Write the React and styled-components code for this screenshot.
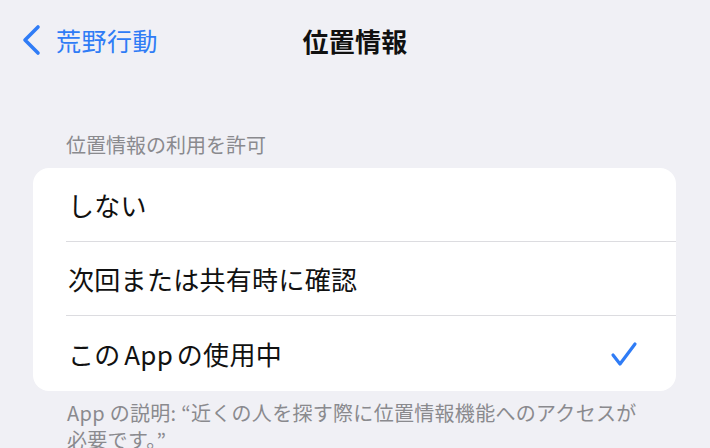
import React from "react";
import styled, { createGlobalStyle } from "styled-components";

const Global = createGlobalStyle`
  html, body { margin: 0; padding: 0; background: #f0f0f5; }
  body {
    font-family: "Noto Sans CJK JP", "Noto Sans", sans-serif;
    -webkit-font-smoothing: antialiased;
  }
`;

const Page = styled.div`
  width: 710px;
  height: 448px;
  overflow: hidden;
  background: #f0f0f5;
`;

const NavBar = styled.header`
  display: grid;
  grid-template-columns: 1fr auto 1fr;
  align-items: center;
  height: 80px;
  padding: 0 22px;
  box-sizing: border-box;
`;

const Back = styled.div`
  display: flex;
  align-items: center;
  gap: 14px;
  color: #2f7cf6;
  font-size: 25px;
  letter-spacing: 0.5px;
`;

const Title = styled.h1`
  margin: 0;
  font-size: 26px;
  font-weight: 700;
  color: #111;
  letter-spacing: 0.2px;
`;

const Content = styled.main`
  padding: 0 34px 0 33px;
`;

const SectionHeader = styled.div`
  margin-top: 51px;
  padding-left: 33px;
  font-size: 20px;
  line-height: 28px;
  color: #8a8a8e;
`;

const Card = styled.div`
  margin-top: 9px;
  background: #fff;
  border-radius: 16px;
  overflow: hidden;
`;

const Row = styled.div`
  padding-left: 33px;
`;

const RowInner = styled.div`
  display: flex;
  align-items: center;
  justify-content: space-between;
  height: ${(p) => (p.$last ? 75 : 73)}px;
  padding: 0 38px 0 2px;
  border-bottom: ${(p) => (p.$last ? "none" : "1px solid #dcdce0")};
  font-size: 26px;
  letter-spacing: 0.3px;
  word-spacing: -2.5px;
  color: #111;
`;

const Footer = styled.div`
  margin-top: 8px;
  padding-left: 34px;
  padding-right: 30px;
  font-size: 20px;
  line-height: 27px;
  letter-spacing: 0.3px;
  color: #8a8a8e;
`;

const Chevron = () => (
  <svg width="20" height="32" viewBox="0 0 20 32">
    <polyline
      points="16,3 3,16 16,29"
      fill="none"
      stroke="#2f7cf6"
      strokeWidth="3.6"
      strokeLinecap="round"
      strokeLinejoin="round"
    />
  </svg>
);

const Check = () => (
  <svg width="28" height="26" viewBox="0 0 28 26">
    <polyline
      points="3,14 10,23 25,3"
      fill="none"
      stroke="#2f7cf6"
      strokeWidth="3.2"
      strokeLinecap="round"
      strokeLinejoin="round"
    />
  </svg>
);

const options = [
  { label: "しない" },
  { label: "次回または共有時に確認" },
  { label: "この App の使用中", checked: true },
];

export default function App() {
  return (
    <Page>
      <Global />
      <NavBar>
        <Back>
          <Chevron />
          <span>荒野行動</span>
        </Back>
        <Title>位置情報</Title>
        <div />
      </NavBar>
      <Content>
        <SectionHeader>位置情報の利用を許可</SectionHeader>
        <Card>
          {options.map((o, i) => (
            <Row key={o.label}>
              <RowInner $last={i === options.length - 1}>
                <span>{o.label}</span>
                {o.checked && <Check />}
              </RowInner>
            </Row>
          ))}
        </Card>
        <Footer>
          App の説明: “近くの人を探す際に位置情報機能へのアクセスが必要です。”
        </Footer>
      </Content>
    </Page>
  );
}
